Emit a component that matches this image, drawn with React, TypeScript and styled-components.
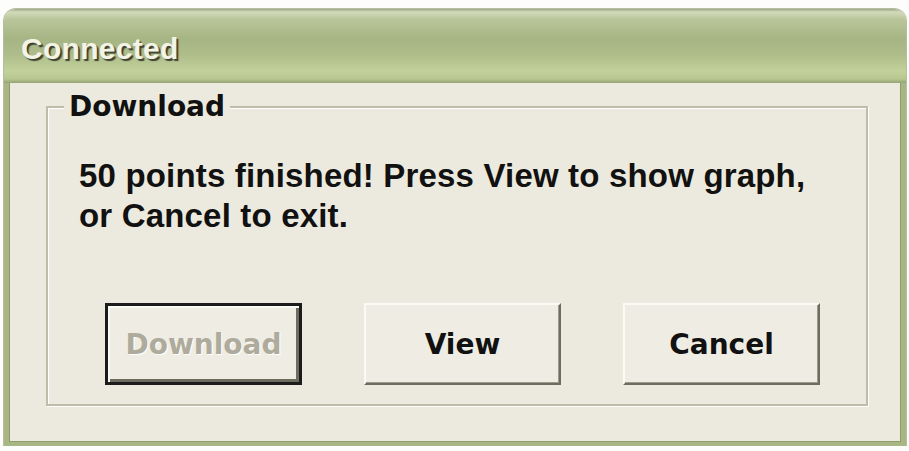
import React from 'react';
import styled, { createGlobalStyle } from 'styled-components';

const colors = {
    face: '#eceade',
    frame: '#a7b683',
    frameDark: '#8e9c6c',
    etch: '#bfbcaa',
    text: '#111111',
    disabled: '#aeab9c',
};

const GlobalStyle = createGlobalStyle`
    html, body {
        margin: 0;
        padding: 0;
        background: #fdfdfb;
    }
`;

const Window = styled.div`
    width: 902px;
    height: 437px;
    margin: 9px 0 0 4px;
    display: flex;
    flex-direction: column;
    border-radius: 12px 12px 0 0;
    overflow: hidden;
    box-shadow: 0 0 0 1px #b7bca4;
`;

const TitleBar = styled.div`
    height: 74px;
    flex-shrink: 0;
    display: flex;
    align-items: center;
    padding-left: 17px;
    background: linear-gradient(
        to bottom,
        #9ea784 0px,
        #d3dbbb 3px,
        #bac69a 10px,
        #a6b584 30px,
        #aebd8a 46px,
        #c3d29b 62px,
        #b8c690 70px,
        #95a274 74px
    );
`;

const Title = styled.span`
    font-family: 'Liberation Sans', Arial, sans-serif;
    font-weight: 700;
    font-size: 30px;
    letter-spacing: 0.3px;
    color: #f3f3e6;
    text-shadow: 2px 2px 1px #3e4230;
    margin-top: 6px;
`;

const Body = styled.div`
    flex: 1;
    display: flex;
    flex-direction: column;
    background: ${colors.face};
    border-style: solid;
    border-color: ${colors.frame};
    border-width: 0 5px 4px 5px;
    box-shadow: inset 1px 0 0 ${colors.frameDark}, inset -1px -1px 0 ${colors.frameDark};
    padding: 10px 33px 36px 37px;
`;

const Group = styled.fieldset`
    flex: 1;
    margin: 0;
    padding: 0 0 19px 0;
    min-width: 0;
    border: 2px solid ${colors.etch};
    box-shadow: 1px 1px 0 #ffffff, inset 1px 1px 0 #ffffff;
    display: flex;
    flex-direction: column;
`;

const Legend = styled.legend`
    margin-left: 16px;
    padding: 0 5px;
    background: ${colors.face};
    font-family: 'DejaVu Sans', Verdana, sans-serif;
    font-weight: 700;
    font-size: 28px;
    line-height: 28px;
    color: ${colors.text};
`;

const Message = styled.p`
    margin: 35px 0 0 31px;
    font-family: 'Liberation Sans', Arial, sans-serif;
    font-weight: 700;
    font-size: 33px;
    letter-spacing: 0.18px;
    line-height: 40px;
    color: ${colors.text};
`;

const ButtonRow = styled.div`
    margin-top: auto;
    margin-left: 57px;
    display: flex;
    gap: 62px;
`;

const Button = styled.button<{ $default?: boolean }>`
    width: 197px;
    height: 82px;
    padding: 0;
    font-family: 'DejaVu Sans', Verdana, sans-serif;
    font-weight: 700;
    font-size: 28px;
    color: ${colors.text};
    background: #efede3;
    border-style: solid;
    border-width: ${p => (p.$default ? 3 : 2)}px;
    border-color: ${p => (p.$default ? '#1c1c1c' : '#fbfbf6 #6e6c5e #6e6c5e #fbfbf6')};
    box-shadow: ${p =>
        p.$default
            ? 'inset 2px 2px 0 #fbfbf6, inset -3px -3px 0 #6e6c5e'
            : 'inset -1px -1px 0 #9c9a8b'};
    cursor: default;

    &:disabled {
        color: ${colors.disabled};
        text-shadow: 1px 1px 0 #ffffff;
    }
`;

export default function App() {
    return (
        <>
            <GlobalStyle />
            <Window>
                <TitleBar>
                    <Title>Connected</Title>
                </TitleBar>
                <Body>
                    <Group>
                        <Legend>Download</Legend>
                        <Message>
                            50 points finished! Press View to show graph,
                            <br />
                            or Cancel to exit.
                        </Message>
                        <ButtonRow>
                            <Button $default disabled>Download</Button>
                            <Button>View</Button>
                            <Button>Cancel</Button>
                        </ButtonRow>
                    </Group>
                </Body>
            </Window>
        </>
    );
}
